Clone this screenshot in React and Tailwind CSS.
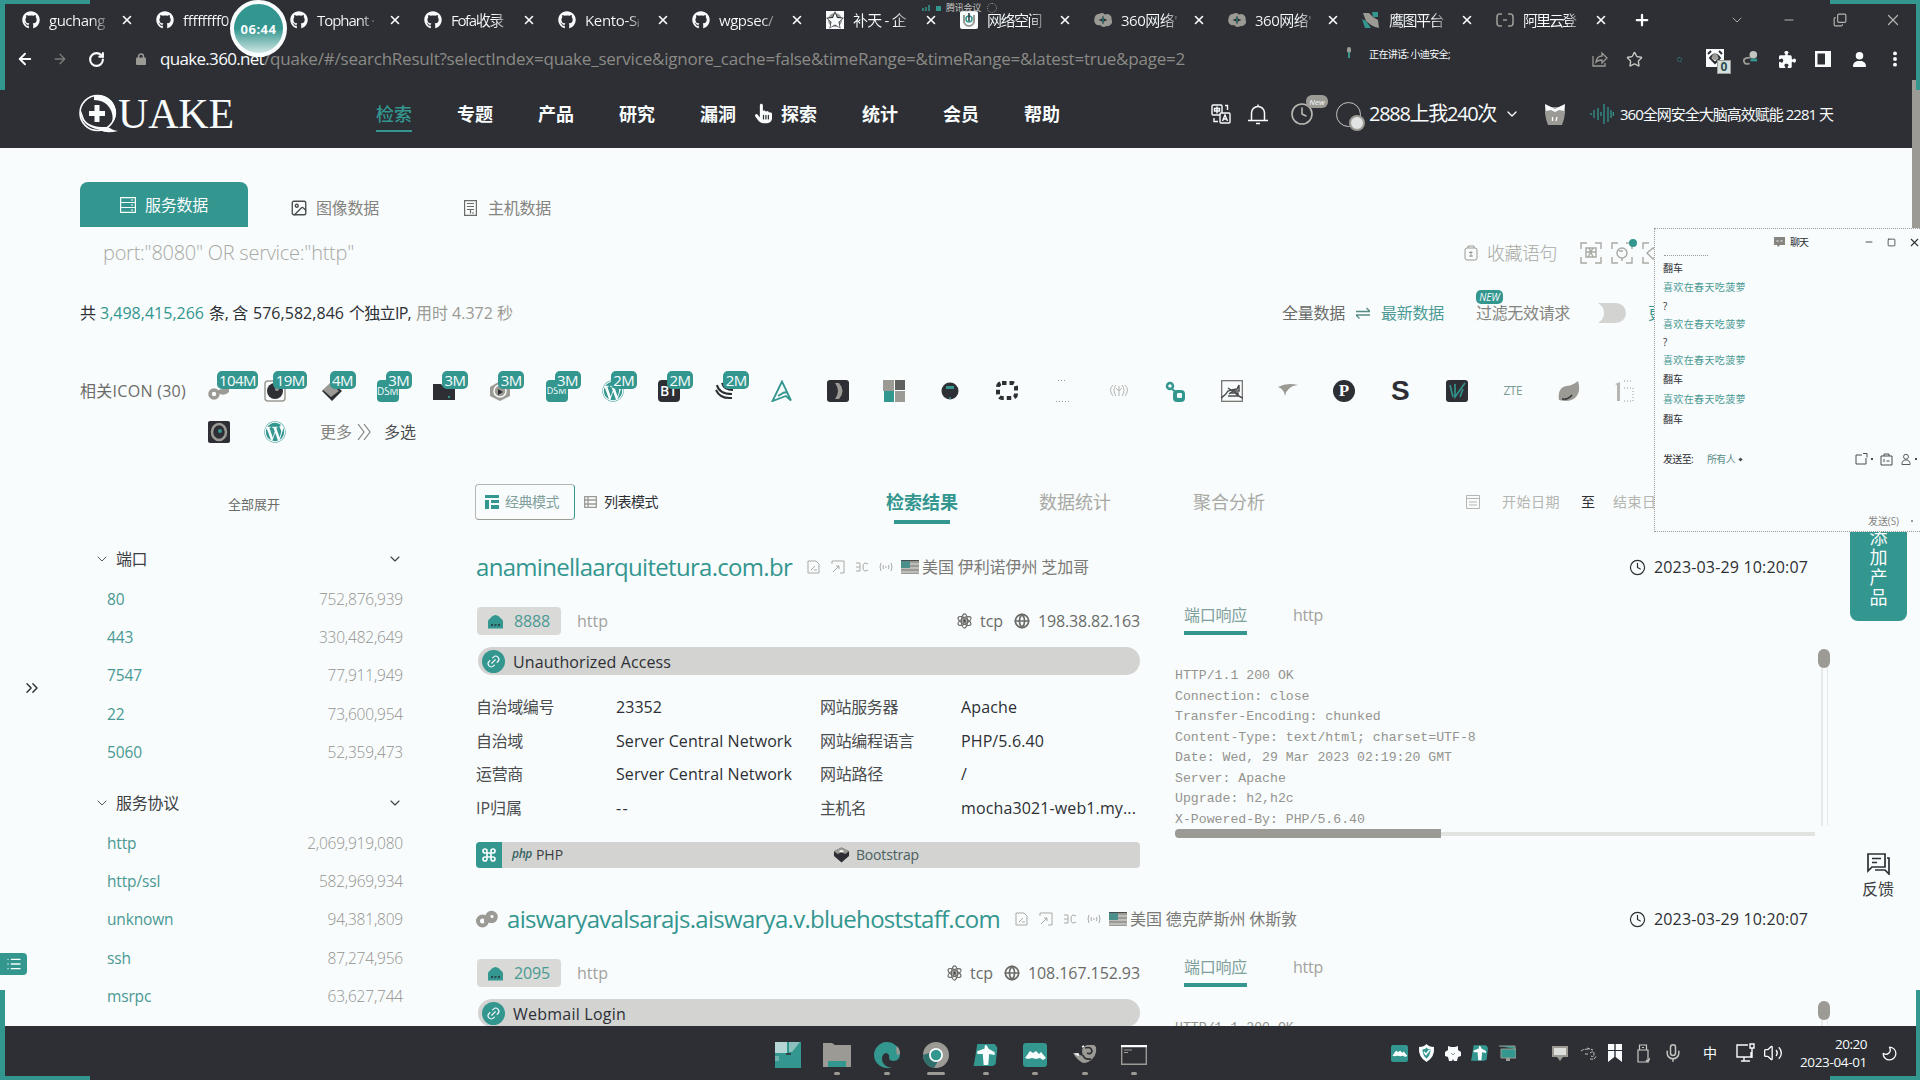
import React, { useLayoutEffect, useRef, useState } from "react";
import {
  ArrowLeft, ArrowRight, RotateCw, X, Plus, Minus, ChevronDown, ChevronsRight, Star, Clock,
  Image as ImageIcon, Copy, Calendar, Globe, Link2, Command, Mic, Volume2, Moon,
  Square, List,
} from "lucide-react";
import {
  FaGithub, FaWordpress, FaPuzzlePiece, FaUser, FaEllipsisVertical, FaHandPointer,
} from "react-icons/fa6";

/* Single-line text whose tracking is computed so that it fills its own width. */
function Fit({ className = "", children }) {
  const outer = useRef(null);
  const inner = useRef(null);
  const [ls, setLs] = useState(0);
  useLayoutEffect(() => {
    inner.current.style.letterSpacing = "0px";
    const natural = inner.current.getBoundingClientRect().width;
    const target = outer.current.getBoundingClientRect().width;
    const n = inner.current.textContent.length || 1;
    const v = (target - natural) / n;
    inner.current.style.letterSpacing = v + "px";
    setLs(v);
  }, [children]);
  return (
    <span ref={outer} className={"block shrink-0 whitespace-nowrap " + className}>
      <span ref={inner} className="inline-block" style={{ letterSpacing: ls + "px" }}>{children}</span>
    </span>
  );
}

const Meteor = ({ className }) => (
  <svg viewBox="0 0 18 18" className={className}>
    <rect width="18" height="18" fill="#f8fcfd" />
    <circle cx="9" cy="9" r="7" fill="#9b9a94" />
    <path d="M9 0l2.700 6 6.300.7-4.700 4.300 1.300 6.500L9 14.300 3.400 17.500l1.300-6.500L0 6.700 6.300 6z" fill="#2d2f34" />
    <path d="M9 2l2 5 5.500.5-4 3.600 1.200 5.400L9 13.500l-4.700 3 1.200-5.400-4-3.600L7 7z" fill="#f8fcfd" />
  </svg>
);
const NetSpace = ({ className }) => (
  <svg viewBox="0 0 18 18" className={className}>
    <rect width="18" height="18" rx="2" fill="#f8fcfd" />
    <path d="M4 4v6a5 5 0 0 0 10 0V4" fill="none" stroke="#9b9a94" strokeWidth="2" />
    <circle cx="9" cy="8" r="3" fill="none" stroke="#33968f" strokeWidth="1.500" />
    <path d="M9 2v8" stroke="#2d2f34" strokeWidth="1.500" />
  </svg>
);
const Cloud360 = ({ className }) => (
  <svg viewBox="0 0 18 18" className={className}>
    <path d="M5 3a5 5 0 0 1 6 .5 4.500 4.500 0 0 1 6.500 5 4.500 4.500 0 0 1-5 6.500 5 5 0 0 1-6.500-1A4.600 4.600 0 0 1 .5 8 4.500 4.500 0 0 1 5 3z" fill="#9b9a94" />
    <path d="M9 4.500l1.300 3.200 3.200 1.300-3.200 1.300L9 13.500l-1.300-3.200L4.500 9l3.200-1.300z" fill="#2d2f34" />
    <path d="M9 6v6" stroke="#33968f" strokeWidth="1" />
  </svg>
);
const Hawk = ({ className }) => (
  <svg viewBox="0 0 18 18" className={className}>
    <path d="M1 2h6l4 4 5 3 1 8-4-1-4-2-5-4z" fill="#9b9a94" />
    <path d="M10 1h6v5h-5zM0 8l4 2 5 7H3z" fill="#33968f" />
  </svg>
);
const Bracket = ({ className }) => (
  <svg viewBox="0 0 18 18" className={className} fill="none" stroke="#9b9a94" strokeWidth="1.600">
    <path d="M6 3H3.500Q1 3 1 6v6q0 3 2.500 3H6M12 3h2.500Q17 3 17 6v6q0 3-2.500 3H12M7 9h4" />
  </svg>
);
const Gh = ({ className }) => <FaGithub className={className} />;

const TABS = [
  [Gh, "guchang", "w-[56px]"],
  [Gh, "ffffffff0", "w-[46px]"],
  [Gh, "Tophant ·", "w-[57px]"],
  [Gh, "Fofa收录", "w-[52px]"],
  [Gh, "Kento-Sᵢ", "w-[54px]"],
  [Gh, "wgpsec/", "w-[54px]"],
  [Meteor, "补天 - 企", "w-[53px]"],
  [NetSpace, "网络空间", "w-[54px]"],
  [Cloud360, "360网络'", "w-[56px]"],
  [Cloud360, "360网络'", "w-[56px]"],
  [Hawk, "鹰图平台", "w-[54px]"],
  [Bracket, "阿里云登", "w-[52px]"],
];

function TabStrip() {
  return (
    <div className="flex h-10 items-center pl-[22px]">
      {TABS.map(([Icon, label, w], i) => (
        <div key={i} className="flex w-[134px] shrink-0 items-center">
          <Icon className="size-[18px] shrink-0" />
          <div className="ml-[9px] w-[71px] shrink-0 overflow-hidden bg-[linear-gradient(90deg,#f8fcfd_60%,#6b6c6e_80%)] bg-clip-text text-[15px] leading-5 text-transparent">
            <Fit className={w}>{label}</Fit>
          </div>
          <X className="size-[14px] shrink-0" strokeWidth={2.800} />
        </div>
      ))}
      <Plus className="ml-[3px] size-[18px]" strokeWidth={3} />
      <div className="ml-auto flex h-8 items-center gap-[37px] pr-[18px] text-[#b4b4b0]">
        <ChevronDown className="size-[16px]" strokeWidth={1.400} />
        <Minus className="size-[14px]" strokeWidth={1.700} />
        <Copy className="size-[14px] -scale-y-100" strokeWidth={2} />
        <X className="size-[18px]" strokeWidth={1.600} />
      </div>
    </div>
  );
}

function AddressBar() {
  return (
    <div className="flex h-[38px] items-center pl-[16px]">
      <ArrowLeft className="size-[18px] shrink-0" strokeWidth={2.500} />
      <ArrowRight className="ml-[18px] size-4 shrink-0 text-[#7c7c79]" strokeWidth={2} />
      <RotateCw className="ml-[20px] size-[17px] shrink-0" strokeWidth={3} />
      <svg viewBox="0 0 10 12" className="ml-[31px] h-3 w-[10px] shrink-0">
        <path d="M2.500 5V3.500a2.500 2.500 0 0 1 5 0V5" fill="none" stroke="#9b9a94" strokeWidth="1.500" />
        <rect y="4.500" width="10" height="7.500" rx="1" fill="#9b9a94" />
      </svg>
      <Fit className="ml-[14px] w-[104px] text-[17px] font-medium leading-6">quake.360.net</Fit>
      <Fit className="w-[921px] text-[17px] leading-6 text-[#8b8a86]">
        /quake/#/searchResult?selectIndex=quake_service&amp;ignore_cache=false&amp;timeRange=&amp;timeRange=&amp;latest=true&amp;page=2
      </Fit>
      <div className="mb-3 ml-[161px] flex items-center">
        <svg viewBox="0 0 6 12" className="h-3 w-[6px]">
          <rect x="1" width="4" height="6" rx="2" fill="#9b9a94" />
          <path d="M3 5v6" stroke="#33968f" strokeWidth="2" />
        </svg>
        <Fit className="ml-[17px] w-[81px] pt-px text-[10px] leading-4">正在讲话: 小迪安全;</Fit>
      </div>
      <div className="ml-auto flex items-center pr-[16px]">
        <svg viewBox="0 0 18 18" className="size-[18px] text-[#9b9a94]" fill="none" stroke="currentColor" strokeWidth="1.300">
          <path d="M2 6v10h12v-3M5 12q1-6 6-6V3l5 5-5 5v-3q-4 0-6 2z" />
        </svg>
        <Star className="ml-[17px] size-[17px] text-[#c4c4c0]" strokeWidth={2} />
        <span className="ml-[34px] size-[5px] rounded-full border border-dotted border-[#33968f]" />
        <div className="relative ml-[24px]">
          <svg viewBox="0 0 20 20" className="size-5">
            <rect width="18" height="18" fill="#f8fcfd" />
            <path d="M2 5l3-3M13 2l3 3M4 9q5-7 10 0l-5 5z" fill="none" stroke="#2d2f34" strokeWidth="2" />
            <circle cx="9" cy="8" r="3" fill="#9b9a94" />
          </svg>
          <span className="absolute left-[11px] top-[11px] h-[14px] w-[14px] border border-[#9b9a94] bg-[#d3e0de] text-center text-[12px] font-bold leading-[12px] text-[#2d4f50]">0</span>
        </div>
        <svg viewBox="0 0 18 18" className="ml-[16px] size-[17px]">
          <path d="M9 7q-8 0-7 4t6 2" fill="none" stroke="#9b9a94" strokeWidth="2" />
          <circle cx="12" cy="4" r="4" fill="#c4c4c0" />
          <rect x="9" y="8" width="7" height="3" fill="#33968f" />
        </svg>
        <FaPuzzlePiece className="ml-[20px] size-[17px]" />
        <svg viewBox="0 0 16 16" className="ml-[19px] size-4">
          <path d="M0 0h16v16H0zM2.500 2.500v11H10v-11z" fill="#f8fcfd" fillRule="evenodd" />
        </svg>
        <FaUser className="ml-[21px] size-[15px]" />
        <FaEllipsisVertical className="ml-[19px] size-[18px]" />
      </div>
    </div>
  );
}

const NAV = ["检索", "专题", "产品", "研究", "漏洞", "探索", "统计", "会员", "帮助"];

function SiteHeader() {
  return (
    <div className="flex h-[70px] items-center pl-[78px] pt-[2px]">
      <div className="flex h-10 w-[155px] shrink-0 items-center">
        <svg viewBox="0 0 42 40" className="h-10 w-[42px] shrink-0">
          <ellipse cx="19.500" cy="19" rx="17.500" ry="17.500" fill="none" stroke="#f8fcfd" strokeWidth="1.600" />
          <path d="M16 1.500Q34 0 38 16q1 8-4 13 2-9-3-16T16 6z" fill="#f8fcfd" />
          <path d="M2 14q-1 18 20 22 6 4 18 1-6-1-10-4Q8 34 5 22z" fill="#f8fcfd" />
          <path d="M19 11v17M11 19.500h16" stroke="#f8fcfd" strokeWidth="5" />
        </svg>
        <Fit className="-ml-[2px] w-[116px] font-['Liberation_Serif',serif] text-[42px] leading-10">UAKE</Fit>
      </div>
      <nav className="ml-[143px] flex shrink-0 gap-[45px] text-[18px] font-bold leading-6">
        {NAV.map((n, i) => (
          <span key={n} className={i === 0 ? "w-9 whitespace-nowrap border-b-2 border-[#33968f] pb-1 pt-[6px] font-medium text-[#33968f]" : "w-9 whitespace-nowrap pt-[6px]"}>
            {n}
          </span>
        ))}
      </nav>
      <div className="ml-[151px] flex items-center">
        <svg viewBox="0 0 20 20" className="size-5" fill="none" stroke="#f8fcfd" strokeWidth="1.400">
          <rect x="1" y="1" width="10" height="10" rx="1" />
          <path d="M6 2.500v7M3.500 4.500h5v2.500h-5zM14 1.500h2.500V6M3 14v3.500h4" />
          <rect x="9" y="9" width="10" height="10" rx="1" fill="#2d2f34" />
          <path d="M11.500 17l2.500-6 2.500 6M12.500 15h3" />
        </svg>
        <svg viewBox="0 0 20 22" className="ml-[17px] h-[22px] w-5" fill="none" stroke="#f8fcfd" strokeWidth="1.500">
          <path d="M3.500 17.500V10a6.500 6.500 0 0 1 13 0v7.500M0 17.500h20M10 1.500V4M8 20.500h4" />
        </svg>
        <div className="relative ml-[22px]">
          <Clock className="size-6 text-[#b8b8b3]" strokeWidth={1.600} />
          <span className="absolute -top-[7px] left-[16px] h-[13px] w-[22px] rounded-md bg-[#9b9a94] text-center text-[8px] italic leading-[13px]">New</span>
        </div>
        <div className="relative ml-[22px] size-[25px] rounded-full border border-[#c4c4c0]">
          <span className="absolute left-[12px] top-[12px] size-4 rounded-full border-2 border-[#9b9a94] bg-[#e1e4e3]" />
        </div>
        <Fit className="ml-2 w-[127px] text-[20px] leading-7">2888上我240次</Fit>
        <ChevronDown className="ml-[8px] size-4" strokeWidth={2} />
        <svg viewBox="0 0 22 22" className="ml-[24px] size-[22px]">
          <path d="M1 2l6 2h8l6-2v8l-1 6-2 6H4l-2-6-1-6z" fill="#9b9a94" />
          <path d="M1 1l4 2 6 3 6-3 4-2-1 7-5-1-4 2-4-2-5 1z" fill="#f8fcfd" />
          <path d="M8.500 14v4M13 14l-1 4" stroke="#f8fcfd" strokeWidth="1.300" />
        </svg>
        <svg viewBox="0 0 24 22" className="ml-[24px] h-[22px] w-6" stroke="#33968f" strokeWidth="1.300">
          <path d="M1 10v2M4 7v8M8 5v12M11 9v4M14 1v20M18 4v15M21 7v8M23.300 9v4" />
        </svg>
        <Fit className="ml-[6px] w-[213px] text-[15px] leading-6">360全网安全大脑高效赋能 2281 天</Fit>
      </div>
    </div>
  );
}

function DataTabs() {
  return (
    <div className="flex h-[45px] items-center text-[16px] text-[#85847f]">
      <div className="flex h-[45px] w-[168px] items-center rounded-t-lg bg-[#33968f] pl-10 text-[#f8fcfd]">
        <svg viewBox="0 0 16 16" className="size-4" fill="none" stroke="currentColor" strokeWidth="1.200">
          <path d="M.6.6h14.800v14.800H.6zM.6 5.500h14.800M.6 10.500h14.800M11 3h2M11 8h2M11 13h2" />
        </svg>
        <Fit className="ml-[9px] w-[63px] leading-6">服务数据</Fit>
      </div>
      <ImageIcon className="ml-[42px] mt-[6px] size-[18px] text-[#4b4c4e]" strokeWidth={1.800} />
      <Fit className="ml-2 mt-[6px] w-[63px] leading-6">图像数据</Fit>
      <svg viewBox="0 0 13 16" className="ml-[85px] mt-[6px] h-4 w-[13px]" fill="none" stroke="#6b6b68" strokeWidth="1.200">
        <path d="M.6.6h11.800v14.800H.6zM3 3.500h7M3 6.500h7M3 9.500h7M6.500 9.500v4M8 13h2" />
      </svg>
      <Fit className="ml-[11px] mt-[6px] w-[63px] leading-6">主机数据</Fit>
    </div>
  );
}

const Corners = ({ children, className }) => (
  <svg viewBox="0 0 22 22" className={className} fill="none" stroke="#a9a9a4" strokeWidth="1.400">
    <path d="M1 7V1h6M15 1h6v6M21 15v6h-6M7 21H1v-6" />
    {children}
  </svg>
);

function SearchRow() {
  return (
    <div className="flex h-[53px] items-center pb-px pl-[23px] text-[#a9a9a4]">
      <Fit className="w-[251px] text-[20px] font-light leading-7">port:"8080" OR service:"http"</Fit>
      <svg viewBox="0 0 14 16" className="ml-[1110px] h-4 w-[14px] shrink-0" fill="none" stroke="#9b9a94">
        <rect x="1" y="3" width="12" height="12" rx="2" />
        <path d="M4 3V1h6v2M7 6v6M5 7.500h3.500M5 11h4" />
      </svg>
      <Fit className="ml-[9px] w-[70px] text-[18px] font-light leading-6">收藏语句</Fit>
      <Corners className="ml-[23px] size-[22px] shrink-0"><path d="M6 6h10v9H6zM6 10h10M9 6l4 9M13 6l-5 9" /></Corners>
      <div className="relative ml-[9px] shrink-0">
        <Corners className="size-[22px]"><circle cx="11" cy="11" r="5" /><path d="M11 16v3M8 9h4" /></Corners>
        <span className="absolute -top-[3px] left-[18px] size-2 rounded-full bg-[#33968f]" />
      </div>
      <Corners className="ml-[9px] size-[22px] shrink-0"><path d="M5 11l6-5 6 5-6 6z" /></Corners>
    </div>
  );
}

function StatsRow() {
  return (
    <div className="flex h-[66px] items-center text-[16px] leading-6 text-[#2d2f34]">
      <Fit className="w-4">共</Fit>
      <Fit className="ml-1 w-[104px] text-[#33968f]">3,498,415,266</Fit>
      <Fit className="ml-[5px] w-[39px]">条, 含</Fit>
      <Fit className="ml-[5px] w-[91px] font-medium">576,582,846</Fit>
      <Fit className="ml-[5px] w-[62px]">个独立IP,</Fit>
      <Fit className="ml-[5px] w-[97px] text-[#9b9a94]">用时 4.372 秒</Fit>
      <Fit className="ml-[769px] w-[63px] text-[#6b6b68]">全量数据</Fit>
      <svg viewBox="0 0 14 12" className="ml-[11px] h-3 w-[14px] shrink-0" fill="none" stroke="#5a8a85" strokeWidth="1.300">
        <path d="M0 4.500h14L10.500 1M14 8H0l3.500 3.500" />
      </svg>
      <Fit className="ml-[11px] w-[63px] text-[#4c9a94]">最新数据</Fit>
      <div className="relative ml-[32px] shrink-0">
        <Fit className="w-[94px] text-[#85847f]">过滤无效请求</Fit>
        <span className="absolute -top-[11px] left-0 h-[14px] w-[27px] rounded-[5px] bg-[#33968f] text-center text-[10px] italic leading-[14px] text-[#f8fcfd]">NEW</span>
      </div>
      <svg viewBox="0 0 28 20" className="ml-[28px] h-5 w-[28px] shrink-0">
        <path d="M0 0h18a10 10 0 0 1 0 20H0q6-4 6-10T0 0z" fill="#d3d4d1" />
      </svg>
      <Fit className="ml-[22px] w-4 text-[#33968f]">更</Fit>
    </div>
  );
}

const icon = "size-[22px] shrink-0";
const Box = ({ children, v = "0 0 22 22" }) => <svg viewBox={v} className={icon}>{children}</svg>;
const D = "#2d2f34", G = "#9b9a94", T = "#33968f", W = "#f8fcfd";

const ICONS = [
  [<Box key="a"><circle cx="6" cy="14" r="4" fill="none" stroke={G} strokeWidth="3.500" /><path d="M8 11q6-3 13-2v3q-4 4-9 2z" fill={G} /></Box>, "104M", "w-[41px]"],
  [<Box key="b"><rect x="1" y="1" width="20" height="20" rx="3" fill="none" stroke={G} strokeWidth="1.500" /><circle cx="11" cy="11" r="8" fill={D} /><circle cx="13" cy="9" r="2" fill={G} /></Box>, "19M", "w-[34px]"],
  [<Box key="c"><path d="M11 2l10 9-10 10L1 11z" fill={D} /><path d="M9 3l9 8-8 6-8-7z" fill={G} /></Box>, "4M", "w-[26px]"],
  [<div key="d" className="size-[22px] rounded bg-[#33968f] text-center text-[10px] leading-[22px] text-[#f8fcfd]">DSM</div>, "3M", "w-[26px]"],
  [<Box key="e"><path d="M0 4h8l2 2h12v14H0z" fill={D} /><circle cx="16" cy="17" r="1.200" fill={T} /></Box>, "3M", "w-[26px]"],
  [<Box key="f"><path d="M11 1l10 6v9l-10 5-10-5V7z" fill={G} /><circle cx="11" cy="11" r="6" fill="none" stroke={W} strokeWidth="1.500" /><path d="M9 9l5 3-5 3z" fill={D} /></Box>, "3M", "w-[26px]"],
  [<div key="g" className="size-[22px] rounded bg-[#33968f] text-center text-[9px] leading-[22px] text-[#f8fcfd]">DSM</div>, "3M", "w-[26px]"],
  [<FaWordpress key="h" className={icon + " text-[#33968f]"} />, "2M", "w-[26px]"],
  [<div key="i" className="size-[22px] rounded bg-[#2d2f34] pl-[2px] text-[14px] font-semibold leading-[22px] text-[#f8fcfd]">BT</div>, "2M", "w-[26px]"],
  [<Box key="j"><path d="M3 5q2 9 15 9M8 3q2 7 11 7M2 10q4 9 16 8" fill="none" stroke={D} strokeWidth="2" /></Box>, "2M", "w-[26px]"],
  [<Box key="k"><path d="M11 1.500L1.500 21 15 16l5 4.500zM7 16l6-3.500h3" fill="none" stroke={T} strokeWidth="1.800" /></Box>],
  [<Box key="l"><rect width="22" height="22" rx="3" fill={D} /><path d="M8 3h4q7 8 0 16H8q6-8 0-16z" fill={G} /></Box>],
  [<Box key="m"><path d="M0 0h11v11H0zM12 11h10v11H12z" fill={G} /><path d="M12 0h10v10H12z" fill="#5f6060" /><path d="M1 11h10v11H1z" fill={T} /></Box>],
  [<Box key="n"><circle cx="11" cy="11" r="8.500" fill={D} /><path d="M7 6h8v3H7z" fill={T} /><circle cx="11" cy="18" r="1" fill={T} /></Box>],
  [<Box key="o"><rect x="2" y="3" width="18" height="15" rx="4" fill="none" stroke={D} strokeWidth="4" strokeDasharray="4.500 3" /></Box>],
  [<Box key="p"><path d="M6 .5h9M4 21.500h14" stroke={G} strokeDasharray="1 2" /></Box>],
  [<Box key="q"><path d="M5 5q-5 5 0 11M8 5q-4 5 0 11M14 5q4 5 0 11M17 5q5 5 0 11M11 6v10M8 8l3 3 3-3" fill="none" stroke="#b5b5b1" /></Box>],
  [<Box key="r"><circle cx="6" cy="6" r="3" fill="none" stroke={T} strokeWidth="2.500" /><path d="M8 9l5 4" stroke={T} strokeWidth="2" /><rect x="9" y="10" width="12" height="12" rx="4" fill={T} /><rect x="13" y="13" width="5" height="5" rx="1" fill={W} /></Box>],
  [<Box key="s"><rect x=".7" y=".7" width="20.600" height="20.600" fill="none" stroke="#6b6b68" strokeWidth="1.200" /><path d="M0 18Q5 15 7 11l3-1 3 1q3 5 9 7M7 8l3 2 6-1 2-4v6h-6l-4 3M9 13h8v3H7" fill="none" stroke="#4b4c4e" strokeWidth="1.500" /></Box>],
  [<Box key="t"><path d="M1 7q9-5 20-2Q10 6 8 16 7 9 1 7z" fill={G} /></Box>],
  [<div key="u" className="size-[22px] rounded-full bg-[#2d2f34] text-center font-['Liberation_Serif',serif] text-[17px] font-bold leading-[22px] text-[#f8fcfd]">P</div>],
  [<div key="v" className="size-[22px] text-center font-['Liberation_Sans',sans-serif] text-[28px] font-bold leading-[22px] text-[#2d2f34]">S</div>],
  [<Box key="w"><rect width="22" height="22" rx="3" fill={D} /><path d="M4 5l3 12M9 4v13L19 3M14 17l3-8" fill="none" stroke={T} strokeWidth="1.600" /></Box>],
  [<div key="x" className="w-[22px] text-center text-[12px] leading-[22px] tracking-[-0.5px] text-[#7d9c96]">ZTE</div>],
  [<Box key="y"><path d="M1 20Q-1 8 8 6q6 0 12-5 3 10-2 16-6 6-17 3z" fill={G} /><path d="M4 19q6 1 10-4" fill="none" stroke={D} strokeWidth="1.300" /></Box>],
  [<Box key="z"><path d="M1 4l5-2v19H3V5z" fill="#b5b5b1" /><path d="M10 1h8M10 8h9v13h-9" fill="none" stroke={G} strokeDasharray="1 2" /></Box>],
];

function IconRows() {
  return (
    <div className="mt-[17px] text-[16px] leading-6">
      <div className="flex h-14 items-center">
        <Fit className="w-[106px] text-[#6b6b68]">相关ICON (30)</Fit>
        <div className="ml-[22px] flex">
          {ICONS.map(([pic, count, w], i) => (
            <div key={i} className="relative w-[56.25px] shrink-0">
              {pic}
              {count && (
                <span className={"absolute -top-[9px] left-[9px] h-[18px] rounded-[5px] bg-[#33968f] text-center text-[15px] leading-[18px] tracking-[-0.5px] text-[#f8fcfd] " + w}>
                  {count}
                </span>
              )}
            </div>
          ))}
        </div>
      </div>
      <div className="flex h-[26px] items-center pl-32">
        <Box><rect width="22" height="22" rx="2" fill={D} /><ellipse cx="11" cy="11" rx="7" ry="8" fill="none" stroke={G} strokeWidth="2.500" /><circle cx="12" cy="10" r="2" fill={T} /></Box>
        <FaWordpress className="ml-[34px] size-[22px] text-[#33968f]" />
        <Fit className="ml-[34px] w-8 text-[#85847f]">更多</Fit>
        <svg viewBox="0 0 14 16" className="ml-[5px] h-4 w-[14px]" fill="none" stroke="#85847f" strokeWidth="1.200"><path d="M1 0l6 8-6 8M7 0l6 8-6 8" /></svg>
        <Fit className="ml-[13px] w-8 text-[#4b4c4e]">多选</Fit>
      </div>
    </div>
  );
}

const GROUPS = [
  ["端口", "w-[31px]", [["80", "752,876,939"], ["443", "330,482,649"], ["7547", "77,911,949"], ["22", "73,600,954"], ["5060", "52,359,473"]]],
  ["服务协议", "w-[63px]", [["http", "2,069,919,080"], ["http/ssl", "582,969,934"], ["unknown", "94,381,809"], ["ssh", "87,274,956"], ["msrpc", "63,627,744"]]],
];

function Sidebar() {
  return (
    <aside className="w-[396px] shrink-0 pt-[47px] text-[15.500px] leading-6">
      <Fit className="ml-[148px] w-[52px] text-[13px] text-[#6b6b68]">全部展开</Fit>
      <div className="pt-[24px]">
        {GROUPS.map(([name, w, rows]) => (
          <section key={name} className="h-[244px]">
            <div className="flex h-[38px] items-center text-[#3c3e42]">
              <ChevronDown className="ml-[14px] size-[16px]" strokeWidth={1.300} />
              <Fit className={"ml-[6px] text-[16px] " + w}>{name}</Fit>
              <ChevronDown className="ml-auto mr-[73px] size-[16px]" strokeWidth={1.600} />
            </div>
            <div className="pt-[1.500px]">
              {rows.map(([k, v]) => (
                <div key={k} className="flex h-[38.300px] items-center justify-between pl-[27px] pr-[73px]">
                  <span className="tracking-[-0.15px] text-[#4a9993]">{k}</span>
                  <span className="font-light tracking-[-0.2px] text-[#94938e]">{v}</span>
                </div>
              ))}
            </div>
          </section>
        ))}
      </div>
    </aside>
  );
}

function ResultsHead() {
  return (
    <div className="mt-[39px] flex h-10 items-start text-[14px]">
      <div className="-ml-px flex h-9 w-[100px] items-center rounded border border-b-[#9b9a94] border-l-[#b5b5b1] border-r-[#33968f] border-t-[#b5b5b1] pl-[9px]">
        <svg viewBox="0 0 14 14" className="size-[14px]"><path d="M0 0h14v3H0zM0 5h4v9H0zM6 5h8v3H6zM6 10h8v4H6z" fill={T} /></svg>
        <Fit className="ml-[6px] w-[54px] leading-6 text-[#7fa09b]">经典模式</Fit>
      </div>
      <div className="flex h-9 items-center">
        <svg viewBox="0 0 13 12" className="ml-[9px] h-3 w-[13px]" fill="none" stroke={G} strokeWidth="1.300"><path d="M.7.7h11.600v10.600H.7zM0 4h13M0 8h13M4 0v12" /></svg>
        <Fit className="ml-[7px] w-[54px] leading-6 text-[#2d2f34]">列表模式</Fit>
      </div>
      <div className="ml-[228px] flex flex-col items-center">
        <div className="flex h-9 items-center"><Fit className="w-[72px] text-[18px] font-bold leading-6 text-[#33968f]">检索结果</Fit></div>
        <div className="h-1 w-14 bg-[#33968f]" />
      </div>
      <div className="flex h-9 items-center text-[18px] leading-6 text-[#a9a9a4]">
        <Fit className="ml-[81px] w-[72px]">数据统计</Fit>
        <Fit className="ml-[82px] w-[72px]">聚合分析</Fit>
      </div>
      <div className="flex h-9 items-center text-[14px] leading-6 text-[#b5b5b1]">
        <svg viewBox="0 0 14 14" className="ml-[201px] size-[14px]" fill="none" stroke="currentColor"><path d="M.5.5h13v13H.5zM.5 3.500h13M3 7h8M3 10h8" /></svg>
        <Fit className="ml-[22px] w-[58px]">开始日期</Fit>
        <Fit className="ml-[21px] w-[15px] text-[#2d2f34]">至</Fit>
        <Fit className="ml-[17px] w-[58px]">结束日期</Fit>
      </div>
    </div>
  );
}

const CODE = [
  "HTTP/1.1 200 OK", "Connection: close", "Transfer-Encoding: chunked", "Content-Type: text/html; charset=UTF-8",
  "Date: Wed, 29 Mar 2023 02:19:20 GMT", "Server: Apache", "Upgrade: h2,h2c", "X-Powered-By: PHP/5.6.40",
];

const ATTRS = [
  ["自治域编号", "w-[78px]", "23352", "w-[46px]", "网站服务器", "w-[78px]", "Apache", "w-[56px]"],
  ["自治域", "w-[47px]", "Server Central Network", "w-[176px]", "网站编程语言", "w-[94px]", "PHP/5.6.40", "w-[83px]"],
  ["运营商", "w-[47px]", "Server Central Network", "w-[176px]", "网站路径", "w-[63px]", "/", "w-[7px]"],
  ["IP归属", "w-[46px]", "--", "w-[13px]", "主机名", "w-[46px]", "mocha3021-web1.my...", "w-[175px]"],
];

function TinyTools() {
  return (
    <div className="flex shrink-0 items-center gap-[10px] text-[#a9a9a4]">
      <svg viewBox="0 0 14 14" className="size-[14px]" fill="none" stroke="currentColor"><path d="M1 1h8l3 3v9H1zM4 10l4-4M7 10h3" /></svg>
      <svg viewBox="0 0 14 14" className="size-[14px]" fill="none" stroke="currentColor"><path d="M1 4V1h12v12H9M2 12l6-6M5 6h3v3" /></svg>
      <svg viewBox="0 0 14 14" className="size-[14px]" fill="none" stroke="currentColor"><path d="M1 3h4v8H1M1 7h4M13 4q-5-3-5 3t5 3" /></svg>
      <svg viewBox="0 0 14 14" className="size-[14px]" fill="none" stroke="currentColor"><path d="M2 3q-2 4 0 8M4.500 5q-1 2 0 4M12 3q2 4 0 8M9.500 5q1 2 0 4M7 6v2" /></svg>
    </div>
  );
}

function Flag() {
  return (
    <svg viewBox="0 0 18 14" className="ml-2 h-[14px] w-[18px] shrink-0">
      <rect width="18" height="14" fill={G} />
      <path d="M0 4h18M0 8h18M0 12h18" stroke="#dfe1df" />
      <rect width="9" height="8" fill="#4a8f89" />
      <path d="M0 .5h18" stroke="#4b4c4e" />
    </svg>
  );
}

/* Two linked discs used as the site's favicon. */
function LinkedDiscs() {
  return (
    <svg viewBox="0 0 22 18" className="mr-[9px] h-[18px] w-[22px] shrink-0">
      <circle cx="6.500" cy="11" r="4.500" fill="none" stroke={G} strokeWidth="4" />
      <circle cx="15.500" cy="7" r="4" fill="none" stroke={G} strokeWidth="4.500" />
      <path d="M8 12l8-5" stroke={G} strokeWidth="4" />
      <circle cx="6.500" cy="11" r="1.700" fill={W} />
      <circle cx="16" cy="6.500" r="1.500" fill={W} />
    </svg>
  );
}

function Protocol() {
  return (
    <svg viewBox="0 0 15 16" className="h-4 w-[15px]" fill="none" stroke="#6b6b68" strokeWidth="1.200">
      <ellipse cx="7.500" cy="8" rx="3" ry="7.200" />
      <ellipse cx="7.500" cy="8" rx="3" ry="7.200" transform="rotate(60 7.500 8)" />
      <ellipse cx="7.500" cy="8" rx="3" ry="7.200" transform="rotate(-60 7.500 8)" />
      <circle cx="7.500" cy="8" r="1.500" fill="#4b4c4e" />
    </svg>
  );
}

function Result({ second, title, titleW, country, countryW, port, ip, ipW, tag, tagW }) {
  return (
    <article className="h-[352px] shrink-0">
      <div className="flex h-10 items-center">
        {second && <LinkedDiscs />}
        <Fit className={"text-[24px] leading-9 text-[#33968f] " + titleW}>{title}</Fit>
        <div className="ml-[15px]"><TinyTools /></div>
        <Flag />
        <Fit className={"ml-[3px] text-[16px] leading-6 text-[#7a7975] " + countryW}>{country}</Fit>
        <div className="ml-auto flex items-center pr-[112px] text-[#2d2f34]">
          <Clock className="size-[17px]" strokeWidth={1.700} />
          <Fit className="ml-2 w-[154px] text-[16px] leading-6">2023-03-29 10:20:07</Fit>
        </div>
      </div>
      <div className="mt-5 flex">
        <div className="w-[664px] shrink-0">
          <div className="flex h-7 items-center text-[16px] leading-6">
            <div className="ml-px flex h-7 w-[84px] items-center rounded bg-[#d9dad8] pl-[11px] text-[#4a9993]">
              <svg viewBox="0 0 15 14" className="size-[15px]"><path d="M0 14V6l4-4q3.500-3 7 0l4 4v8z" fill={T} /><path d="M3 10.500h9" stroke={D} strokeWidth="1.500" strokeDasharray="2 1.500" /></svg>
              <Fit className="ml-[11px] w-[36px]">{port}</Fit>
            </div>
            <Fit className="ml-4 w-[31px] text-[#a3a29d]">http</Fit>
            <div className="ml-auto flex items-center text-[#6b6b68]">
              <Protocol />
              <Fit className="ml-2 w-[23px]">tcp</Fit>
              <Globe className="ml-[11px] size-4" strokeWidth={2.600} />
              <Fit className={"ml-2 " + ipW}>{ip}</Fit>
            </div>
          </div>
          <div className="ml-[2px] mt-3 flex h-7 items-center rounded-full bg-[#d3d4d2] pl-1">
            <span className="flex size-[23px] items-center justify-center rounded-full bg-[#33968f]">
              <Link2 className="size-[15px] -rotate-45 text-[#f8fcfd]" strokeWidth={1.800} />
            </span>
            <Fit className={"ml-2 pt-px text-[16px] leading-6 text-[#2d2f34] " + tagW}>{tag}</Fit>
          </div>
          {!second && (
            <>
              <div className="mt-[15px] text-[16px] leading-6 text-[#2d2f34]">
                {ATTRS.map((r) => (
                  <div key={r[0]} className="grid h-[33.800px] grid-cols-[140px_204px_141px_1fr] items-center">
                    <Fit className={"text-[#4b4c4e] " + r[1]}>{r[0]}</Fit>
                    <Fit className={r[3]}>{r[2]}</Fit>
                    <Fit className={"text-[#4b4c4e] " + r[5]}>{r[4]}</Fit>
                    <Fit className={r[7]}>{r[6]}</Fit>
                  </div>
                ))}
              </div>
              <div className="mt-[17px] flex h-[26px] items-center rounded bg-[#d3d4d2] text-[14px] leading-5 text-[#3c3e42]">
                <span className="flex h-[26px] w-[26px] items-center justify-center rounded-l bg-[#33968f]">
                  <Command className="size-4 text-[#f8fcfd]" strokeWidth={2.500} />
                </span>
                <Fit className="ml-[10px] w-5 pb-[2px] text-[12px] font-semibold italic text-[#3a6563]">php</Fit>
                <Fit className="ml-1 w-[27px]">PHP</Fit>
                <svg viewBox="0 0 18 16" className="ml-[270px] h-4 w-[17px]"><path d="M9 0l8 4v5l-8 7-8-7V4z" fill={D} /><path d="M9 0l8 4-4 3-4-2-4 2-4-3z" fill={G} /><path d="M7 3h4v2H7z" fill={W} /></svg>
                <Fit className="ml-[6px] w-[63px] text-[#4a5f5f]">Bootstrap</Fit>
              </div>
            </>
          )}
        </div>
        <div className="ml-[35px] w-[655px] shrink-0">
          <div className="ml-[9px] flex items-start text-[16px]">
            <div>
              <Fit className="w-[63px] leading-4 text-[#7fa09b]">端口响应</Fit>
              <div className="mt-2 h-1 bg-[#33968f]" />
            </div>
            <Fit className="ml-[46px] w-[30px] leading-4 text-[#a3a29d]">http</Fit>
          </div>
          <div className="mt-[14px] flex justify-between">
            <div>
              <div className="h-[180px] pt-[17px] font-['Liberation_Mono','Noto_Sans_CJK_SC',monospace] text-[13.200px] leading-[20.500px] text-[#94938e]">
                {CODE.slice(0, second ? 1 : 8).map((l) => (
                  <div key={l} className="whitespace-pre">{l}</div>
                ))}
              </div>
              <div className="flex items-center">
                <div className="h-[9px] w-[266px] rounded-l bg-[#9b9a94]" />
                <div className="h-1 w-[374px] bg-[#e1e3e1]" />
              </div>
            </div>
            <div className="h-[177px] w-3 bg-[linear-gradient(90deg,transparent_3px,#e6e9e8_3px,#e6e9e8_5px,transparent_5px,transparent_9px,#e6e9e8_9px,#e6e9e8_10px,transparent_10px)]">
              <div className="h-[19px] w-3 rounded-md bg-[#9b9a94]" />
            </div>
          </div>
        </div>
      </div>
    </article>
  );
}

const USER = "喜欢在春天吃菠萝";
const CHAT = [
  ["翻车", 0, "h-[19px]", "w-5"], [USER, 1, "h-5", "w-[83px]"], ["?", 0, "h-[18px]", "w-[6px]"], [USER, 1, "h-[18px]", "w-[83px]"],
  ["?", 0, "h-[18px]", "w-[6px]"], [USER, 1, "h-[18px]", "w-[83px]"], ["翻车", 0, "h-5", "w-5"], [USER, 1, "h-5", "w-[83px]"], ["翻车", 0, "h-[19px]", "w-5"],
];

function ChatWindow() {
  return (
    <div className="absolute left-[1654px] top-[228px] flex h-[304px] w-[270px] flex-col border border-dotted border-[#9b9a94] bg-[#f8fcfd] text-[10px] leading-4 text-[#2d2f34]">
      <div className="flex h-[26px] shrink-0 items-center pl-[119px]">
        <svg viewBox="0 0 11 10" className="h-[10px] w-[11px]"><path d="M0 0h11v8H6L4 10 3 8H0z" fill="#85847f" /><path d="M2.500 4h2M6.500 4h2" stroke={W} strokeWidth="1.200" /></svg>
        <Fit className="ml-[5px] w-[18px]">聊天</Fit>
        <Minus className="ml-[56px] size-[10px]" strokeWidth={2} />
        <Square className="ml-[13px] size-[9px]" />
        <X className="ml-[12px] size-[13px]" strokeWidth={2} />
      </div>
      <div className="ml-[9px] h-[3px] w-11 border-t border-dotted border-[#9b9a94]" />
      {CHAT.map(([t, u, h, w], i) => (
        <div key={i} className={"flex shrink-0 items-center pl-[8px] " + h}>
          <Fit className={w + (u ? " text-[#4a9993]" : "")}>{t}</Fit>
        </div>
      ))}
      <div className="mt-[22px] flex h-[18px] shrink-0 items-center pl-[8px]">
        <Fit className="w-[30px]">发送至:</Fit>
        <Fit className="ml-[14px] w-[28px] text-[#5a8a85]">所有人</Fit>
        <span className="ml-1 size-[3px] rotate-45 bg-[#4b4c4e]" />
        <svg viewBox="0 0 13 12" className="ml-[113px] h-3 w-[13px]" fill="none" stroke="#4b4c4e"><path d="M7 2H1v9h10V5M8 .5h4v4" /></svg>
        <span className="ml-[3px] size-[2px] bg-[#4b4c4e]" />
        <svg viewBox="0 0 13 13" className="ml-[7px] size-[13px]" fill="none" stroke="#4b4c4e"><path d="M1 3h11v9H1zM4 3V1h5v2M4 6v3M6.500 8h3" /></svg>
        <svg viewBox="0 0 11 13" className="ml-[8px] h-[13px] w-[10px]" fill="none" stroke="#4b4c4e"><circle cx="5.500" cy="3.500" r="2.700" /><path d="M1 12q0-5 4.500-5T10 12z" /></svg>
        <span className="ml-1 size-[2px] bg-[#4b4c4e]" />
      </div>
      <div className="mt-auto flex h-5 shrink-0 items-center pl-[213px] text-[#85847f]">
        <Fit className="w-[31px]">发送(S)</Fit>
        <span className="ml-3 size-[2px] bg-[#9b9a94]" />
      </div>
    </div>
  );
}

const Airplane = ({ className }) => (
  <svg viewBox="0 0 26 24" className={className}>
    <path d="M4 0h19l3 4-2 18-3 2H0l1-5z" fill={T} />
    <path d="M13 1q2 0 3 4l7 4v3l-6-1-1 12h-5l-1-12-6 0V8l8-3q0-4 1-4z" fill={W} />
  </svg>
);
const Meeting = ({ className }) => (
  <svg viewBox="0 0 24 24" className={className}>
    <rect width="24" height="24" rx="3" fill={T} />
    <path d="M2 15l5-7 3 2 3-2 3 3 2-2 5 6-3 2-3-2-4 1-4-1-4 1z" fill={W} />
  </svg>
);

const APPS = [
  [<svg key="1" viewBox="0 0 26 26" className="size-[26px]"><rect width="26" height="26" fill={T} /><path d="M0 0h12v11H0z" fill="#b5d6d4" /><path d="M14 0h11l-8 10h-3z" fill="#8cc0bc" /><path d="M0 14h4v5H0z" fill="#6db2ad" /><path d="M11 12h5" stroke={D} strokeWidth="1.500" /></svg>, ""],
  [<svg key="2" viewBox="0 0 28 24" className="h-6 w-7"><path d="M0 0h9l3 2h16v22H0z" fill={G} /><path d="M5 18h18v6H5z" fill={T} /></svg>, "w-[6px]"],
  [<svg key="3" viewBox="0 0 27 26" className="h-[26px] w-[27px]"><path d="M14 26A13 13 0 1 1 27 12q0 6-6 7-5 0-5-3 1-4-3-5-4 1-4 6 0 7 10 9z" fill={T} /><path d="M27 12q0-5-3-8l-1 3 1 6z" fill={G} /></svg>, "w-[6px]"],
  [<svg key="4" viewBox="0 0 26 26" className="size-[26px]"><circle cx="13" cy="13" r="13" fill={G} /><path d="M0 13a13 13 0 0 0 11 13l4-7-9-8z" fill="#2f6f6c" /><circle cx="13" cy="13" r="7" fill={W} /><circle cx="13" cy="13" r="5.200" fill={T} /></svg>, "w-[18px]"],
  [<Airplane key="5" className="h-[22px] w-[25px]" />, "w-[6px]"],
  [<Meeting key="6" className="size-6" />, "w-[6px]"],
  [<svg key="7" viewBox="0 0 24 22" className="h-[22px] w-6"><path d="M0 9h5q2 3 5 3Q7 3 14 1h7l2 2q1 7-3 11-4 5-10 5-6-3-10-10z" fill={G} /><path d="M10 11q1 5 8 4M12 4q6-2 7 3-1 4-5 2" fill="none" stroke={D} strokeWidth="1.600" /><path d="M2 10h3v2M9 3l2-1" stroke={W} strokeWidth="1.500" fill="none" /></svg>, "w-[6px]"],
  [<svg key="8" viewBox="0 0 26 20" className="h-5 w-[26px]"><path d="M.7.700h24.600v18.600H.7z" fill="none" stroke={G} strokeWidth="1.400" /><path d="M0 1h26" stroke={W} strokeWidth="2.500" /><path d="M3 5h8M3 7.500h4" stroke={G} /></svg>, "w-[6px]"],
];

function Taskbar() {
  return (
    <div className="flex h-[54px] shrink-0 bg-[#2d2f34] text-[#f8fcfd]">
      <div className="ml-[763px] flex">
        {APPS.map(([pic, w], i) => (
          <div key={i} className="flex w-[49.500px] flex-col items-center pt-[15px]">
            <div className="flex h-[27px] items-center">{pic}</div>
            <div className={"mt-1 h-[3px] rounded-full bg-[#9b9a94] " + w} />
          </div>
        ))}
      </div>
      <div className="ml-auto flex items-center pr-[22px]">
        <div className="flex items-center gap-[10px]">
          <Meeting className="size-[17px]" />
          <svg viewBox="0 0 17 18" className="h-[18px] w-[17px]"><path d="M1 3q5 0 7.500-3Q11 3 16 3q1 10-7.500 15Q0 13 1 3z" fill={W} /><path d="M4.500 5.500q3 0 4-2 1 2 4 2 0 6-4 9-4-3-4-9z" fill={T} /><path d="M6 8l2 2.500L11.500 6" fill="none" stroke={W} strokeWidth="1.500" /></svg>
          <svg viewBox="0 0 16 17" className="h-[17px] w-4"><path d="M3 1l3 1h4l3-1 0 4 3 2v4l-3 1-1 4H9l-1-2-1 2H4l-1-4-3-1V7l3-2z" fill={W} /><path d="M6 8l2 2 2-2" fill="none" stroke={G} /></svg>
          <Airplane className="h-[16px] w-[17px]" />
          <svg viewBox="0 0 18 16" className="h-4 w-[18px]"><path d="M1 1h16v3M3 4h15v9H3z" fill={T} stroke={G} /><path d="M8 13h4v3H8z" fill={G} /></svg>
        </div>
        <svg viewBox="0 0 16 15" className="ml-[36px] h-[15px] w-4"><path d="M0 0h16v11h-5l-3 4-3-4H0z" fill={G} /><path d="M2 2h12v7H2z" fill="#dcdedc" /></svg>
        <svg viewBox="0 0 16 16" className="ml-[13px] size-4 text-[#c4c4c0]" fill="none" stroke="currentColor"><path d="M0 6q4-3 8-1M6 3l6 2M4 9h4M9 8q4-3 4 1t-3 2M9 14q5 1 6-3" strokeDasharray="3 1" /></svg>
        <svg viewBox="0 0 14 18" className="ml-[11px] h-[18px] w-[14px]"><path d="M0 0h6.300v6H0zM7.700 0H14v6H7.700zM0 7h6.300v6L0 18zM7.700 7H14v11l-6.300-5z" fill={W} /></svg>
        <svg viewBox="0 0 13 19" className="ml-[15px] h-[19px] w-[13px]" fill="none" stroke="#c9c9c6" strokeWidth="1.200"><path d="M2.500 6V1h7v5M1 6h10v12H1zM5 3.500h2M9 16l2 2 2-4" /></svg>
        <Mic className="ml-[13px] size-5 text-[#c4c4c0]" strokeWidth={1.800} />
        <span className="ml-[20px] text-[14px] leading-5">中</span>
        <svg viewBox="0 0 19 20" className="ml-[19px] h-5 w-[19px]" fill="none" stroke={W} strokeWidth="1.400"><path d="M12 2H1v12h14V9M5 18h9M8 14v4M14 1h4v4h-4zM16 5v10" /></svg>
        <Volume2 className="ml-[8px] size-5" strokeWidth={1.600} />
        <div className="ml-[16px] flex w-[68px] flex-col items-end text-[13.500px] leading-[18px]">
          <Fit className="w-8">20:20</Fit>
          <Fit className="w-[67px]">2023-04-01</Fit>
        </div>
        <Moon className="ml-[14px] size-[17px] -scale-x-100" strokeWidth={1.800} />
      </div>
    </div>
  );
}

export default function App() {
  return (
    <div className="relative flex h-[1080px] w-[1920px] flex-col overflow-hidden bg-[#f8fcfd] font-['Open_Sans','Noto_Sans_CJK_SC',sans-serif] text-[#f8fcfd]">
      <header className="h-[148px] shrink-0 bg-[#2d2f34]">
        <TabStrip />
        <AddressBar />
        <SiteHeader />
      </header>

      <main className="h-[878px] shrink-0 overflow-hidden pl-20 pt-[34px]">
        <DataTabs />
        <SearchRow />
        <StatsRow />
        <IconRows />
        <div className="flex">
          <Sidebar />
          <div className="flex w-[1444px] shrink-0 flex-col">
            <ResultsHead />
            <div className="mt-[23px]">
              <Result title="anaminellaarquitetura.com.br" titleW="w-[316px]" country="美国 伊利诺伊州 芝加哥" countryW="w-[167px]"
                port="8888" ip="198.38.82.163" ipW="w-[102px]" tag="Unauthorized Access" tagW="w-[158px]" />
              <Result second title="aiswaryavalsarajs.aiswarya.v.bluehoststaff.com" titleW="w-[493px]" country="美国 德克萨斯州 休斯敦" countryW="w-[167px]"
                port="2095" ip="108.167.152.93" ipW="w-[112px]" tag="Webmail Login" tagW="w-[113px]" />
            </div>
          </div>
        </div>
      </main>

      <Taskbar />

      {/* Page scrollbar thumb */}
      <div className="absolute right-0 top-20 h-[150px] w-2 bg-[#9b9a94]" />

      {/* Floating side controls */}
      <ChevronsRight className="absolute left-[22px] top-[678px] size-5 text-[#2d2f34]" strokeWidth={1.700} />
      <div className="absolute left-0 top-[953px] flex h-[22px] w-[27px] items-center justify-center rounded-r bg-[#33968f]">
        <List className="size-4" />
      </div>
      <div className="absolute left-[1850px] top-[480px] flex h-[141px] w-[57px] flex-col items-center justify-end rounded-lg bg-[#33968f] pb-[14px] text-[18px] leading-5">
        {["添", "加", "产", "品"].map((c) => <span key={c}>{c}</span>)}
      </div>
      <div className="absolute left-[1858px] top-[853px] flex w-10 flex-col items-center text-[#3c3e42]">
        <svg viewBox="0 0 23 22" className="h-[22px] w-[23px]" fill="none" stroke={D} strokeWidth="1.700">
          <path d="M1 1h17v13H5l-4 4zM5 5.500h9M5 9.500h5M20 5h2v16l-4-4H8" />
        </svg>
        <Fit className="mt-[2px] w-8 text-[16px] leading-6">反馈</Fit>
      </div>

      <ChatWindow />

      {/* Meeting timer bubble and status */}
      <div className="absolute left-[230px] top-0 flex h-[57px] w-[57px] items-center justify-center rounded-full border-4 border-[#f8fcfd] bg-[linear-gradient(180deg,#33968f_50%,#cfe5e4_100%)]">
        <Fit className="w-[36px] text-[13px] font-bold leading-5">06:44</Fit>
      </div>
      <div className="absolute left-[922px] top-0 flex h-4 items-center text-[8px] leading-3 text-[#c4c4c0]">
        <svg viewBox="0 0 8 6" className="h-[6px] w-2" stroke={T} strokeWidth="1.500"><path d="M1 3v3M4 2v4M7 0v6" /></svg>
        <span className="ml-[6px] size-[5px] bg-[#33968f]" />
        <Fit className="ml-[5px] w-[35px] text-[9px]">腾讯会议</Fit>
        <span className="ml-[6px] size-[10px] rounded-full border border-dotted border-[#9b9a94]" />
      </div>
      <FaHandPointer className="absolute left-[755px] top-[103px] h-[21px] w-[17px]" />

      {/* Screen-share frame corners */}
      <div className="absolute left-0 top-0 h-[90px] w-[90px] border-l-[5px] border-t-4 border-[#33968f]" />
      <div className="absolute right-0 top-0 h-[90px] w-[90px] border-r-4 border-t-4 border-[#33968f]" />
      <div className="absolute bottom-0 left-0 h-[90px] w-[90px] border-b-4 border-l-[5px] border-[#33968f]" />
      <div className="absolute bottom-0 right-0 h-[90px] w-[90px] border-b-4 border-r-4 border-[#33968f]" />
    </div>
  );
}
